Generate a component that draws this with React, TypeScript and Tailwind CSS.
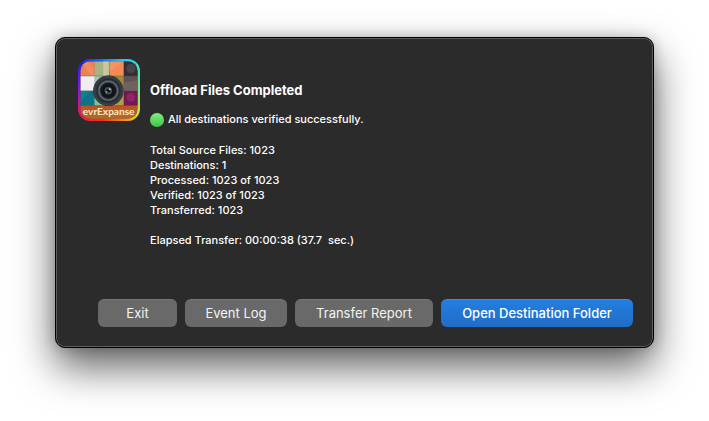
import clsx from "clsx";
import { ReactNode } from "react";

const summary = [
  "Total Source Files: 1023",
  "Destinations: 1",
  "Processed: 1023 of 1023",
  "Verified: 1023 of 1023",
  "Transferred: 1023",
];

const tiles = [
  { x: 30, y: 29, fill: "#ee8052" },
  { x: 72, y: 29, fill: "#a9b283" },
  { x: 116, y: 29, fill: "#f58a55" },
  { x: 159, y: 29, fill: "#303034" },
  { x: 30, y: 73, fill: "#eeeef0" },
  { x: 72, y: 73, fill: "#a8c4b4" },
  { x: 116, y: 73, fill: "#a08a38" },
  { x: 159, y: 73, fill: "#5f5054" },
  { x: 30, y: 117, fill: "#138091" },
  { x: 72, y: 117, fill: "#7fc09a" },
  { x: 116, y: 117, fill: "#b59a4c" },
  { x: 159, y: 117, fill: "#741850" },
];

const AppIcon = () => (
  <svg
    viewBox="23 22 184 184"
    className="size-[62px] shrink-0"
    role="img"
    aria-label="evrExpanse"
  >
    <defs>
      <linearGradient id="frame-top" x1="0" y1="0" x2="1" y2="0">
        <stop offset="0" stopColor="#1a20f0" />
        <stop offset="0.35" stopColor="#1c62f4" />
        <stop offset="0.7" stopColor="#22c0f0" />
        <stop offset="1" stopColor="#30e0dc" />
      </linearGradient>
      <linearGradient id="frame-bottom" x1="0" y1="0" x2="1" y2="0">
        <stop offset="0" stopColor="#fa1450" />
        <stop offset="0.4" stopColor="#ff2a18" />
        <stop offset="0.75" stopColor="#ff8a18" />
        <stop offset="1" stopColor="#f2dc28" />
      </linearGradient>
      <linearGradient id="frame-left" x1="0" y1="0" x2="0" y2="1">
        <stop offset="0" stopColor="#1a20f0" />
        <stop offset="0.45" stopColor="#7a18e8" />
        <stop offset="0.75" stopColor="#d81480" />
        <stop offset="1" stopColor="#fa1450" />
      </linearGradient>
      <linearGradient id="frame-right" x1="0" y1="0" x2="0" y2="1">
        <stop offset="0" stopColor="#30dcd8" />
        <stop offset="0.5" stopColor="#70ec90" />
        <stop offset="1" stopColor="#f2dc28" />
      </linearGradient>
      <linearGradient id="band" x1="0" y1="0" x2="0" y2="1">
        <stop offset="0" stopColor="#bd5220" />
        <stop offset="1" stopColor="#a8702a" />
      </linearGradient>
      <radialGradient id="lens">
        <stop offset="0" stopColor="#14161a" />
        <stop offset="0.5" stopColor="#1c2026" />
        <stop offset="0.62" stopColor="#687078" />
        <stop offset="0.72" stopColor="#23282e" />
        <stop offset="0.88" stopColor="#363d44" />
        <stop offset="1" stopColor="#15181c" />
      </radialGradient>
      <clipPath id="outer-shape">
        <rect x="23" y="22" width="184" height="184" rx="36" />
      </clipPath>
      <clipPath id="inner-shape">
        <rect x="30" y="29" width="170" height="170" rx="29" />
      </clipPath>
    </defs>

    <g clipPath="url(#outer-shape)">
      <path d="M23 22H207L115 114Z" fill="url(#frame-top)" />
      <path d="M23 206H207L115 114Z" fill="url(#frame-bottom)" />
      <path d="M23 22V206L115 114Z" fill="url(#frame-left)" />
      <path d="M207 22V206L115 114Z" fill="url(#frame-right)" />
    </g>

    <g clipPath="url(#inner-shape)">
      <rect x="30" y="29" width="170" height="170" fill="#4a3c34" />
      {tiles.map((tile) => (
        <rect
          key={`${tile.x}-${tile.y}`}
          x={tile.x}
          y={tile.y}
          width="43"
          height="43"
          fill={tile.fill}
        />
      ))}
      <path d="M98 29H114V72H98Z" fill="#d6d2b0" opacity="0.7" />
      <path d="M30 29H52L70 50V70H62Z" fill="#f8a078" opacity="0.4" />
      <path d="M116 29H158L116 60Z" fill="#f8a070" opacity="0.5" />
      <path d="M159 92L202 84V116H159Z" fill="#74605e" />
      <circle cx="180" cy="50" r="14" fill="#45454a" />
      <circle cx="180" cy="136" r="13" fill="#8c2468" />
      <path d="M30 148L58 118H70V160H30Z" fill="#0c6a82" opacity="0.6" />
      <rect x="30" y="160" width="170" height="41" fill="url(#band)" />
      <circle cx="113" cy="116" r="45" fill="url(#lens)" />
      <circle
        cx="113"
        cy="116"
        r="43"
        fill="none"
        stroke="#4e565e"
        strokeWidth="2"
      />
      <circle cx="113" cy="116" r="21" fill="#101418" />
      <circle cx="113" cy="116" r="11" fill="#46525a" />
      <circle cx="113" cy="116" r="6" fill="#0c0e10" />
      <circle cx="117" cy="112" r="3" fill="#c4ced2" />
      <circle cx="108" cy="120" r="3" fill="#8a969a" />
    </g>
    <text
      x="114"
      y="188"
      textAnchor="middle"
      fill="#fde9c4"
      className="font-[Lato,sans-serif] text-[30px] font-bold"
    >
      evrExpanse
    </text>
  </svg>
);

interface DialogButtonProps {
  children: ReactNode;
  primary?: boolean;
  className?: string;
}

const DialogButton = ({ children, primary, className }: DialogButtonProps) => (
  <button
    type="button"
    className={clsx(
      "h-7 rounded-md border-t text-center text-[13px] whitespace-nowrap",
      primary
        ? "border-[#3a8de6] bg-linear-to-b from-[#247ee2] to-[#206dc3] font-medium text-white"
        : "border-[#757575] bg-[#696969] text-[#f4f4f4]",
      className,
    )}
  >
    {children}
  </button>
);

export default function App() {
  return (
    <main className="overflow-hidden bg-white px-[55px] pt-[37px] pb-[73px] font-[Inter,'Liberation_Sans',sans-serif] text-white">
      <section
        role="dialog"
        aria-labelledby="dialog-title"
        className="rounded-[10px] border border-black bg-[#2b2b2b] px-5 pt-[21px] pb-5 shadow-[inset_0_0_0_1px_#5e5e5e,0_19px_40px_rgba(0,0,0,0.62),0_0_14px_rgba(0,0,0,0.2)]"
      >
        <div className="flex items-start gap-2.5 px-0.5">
          <AppIcon />
          <div className="pt-[23px] text-[11px] leading-[15px] font-medium">
            <h1 id="dialog-title" className="text-[13px] leading-4 font-bold">
              Offload Files Completed
            </h1>
            <p className="mt-3.5 flex items-center gap-1">
              <span className="size-[14px] rounded-full bg-linear-to-b from-[#7bf37c] to-[#43c04b]" />
              All destinations verified successfully.
            </p>
            <ul className="mt-4">
              {summary.map((line) => (
                <li key={line}>{line}</li>
              ))}
            </ul>
            <p className="mt-[15px] whitespace-pre">
              Elapsed Transfer: 00:00:38 (37.7{"  "}sec.)
            </p>
          </div>
        </div>

        <div className="mt-[51px] flex justify-end gap-2">
          <DialogButton className="w-[79px]">Exit</DialogButton>
          <DialogButton className="w-[102px]">Event Log</DialogButton>
          <DialogButton className="w-[138px]">Transfer Report</DialogButton>
          <DialogButton primary className="w-48">
            Open Destination Folder
          </DialogButton>
        </div>
      </section>
    </main>
  );
}
